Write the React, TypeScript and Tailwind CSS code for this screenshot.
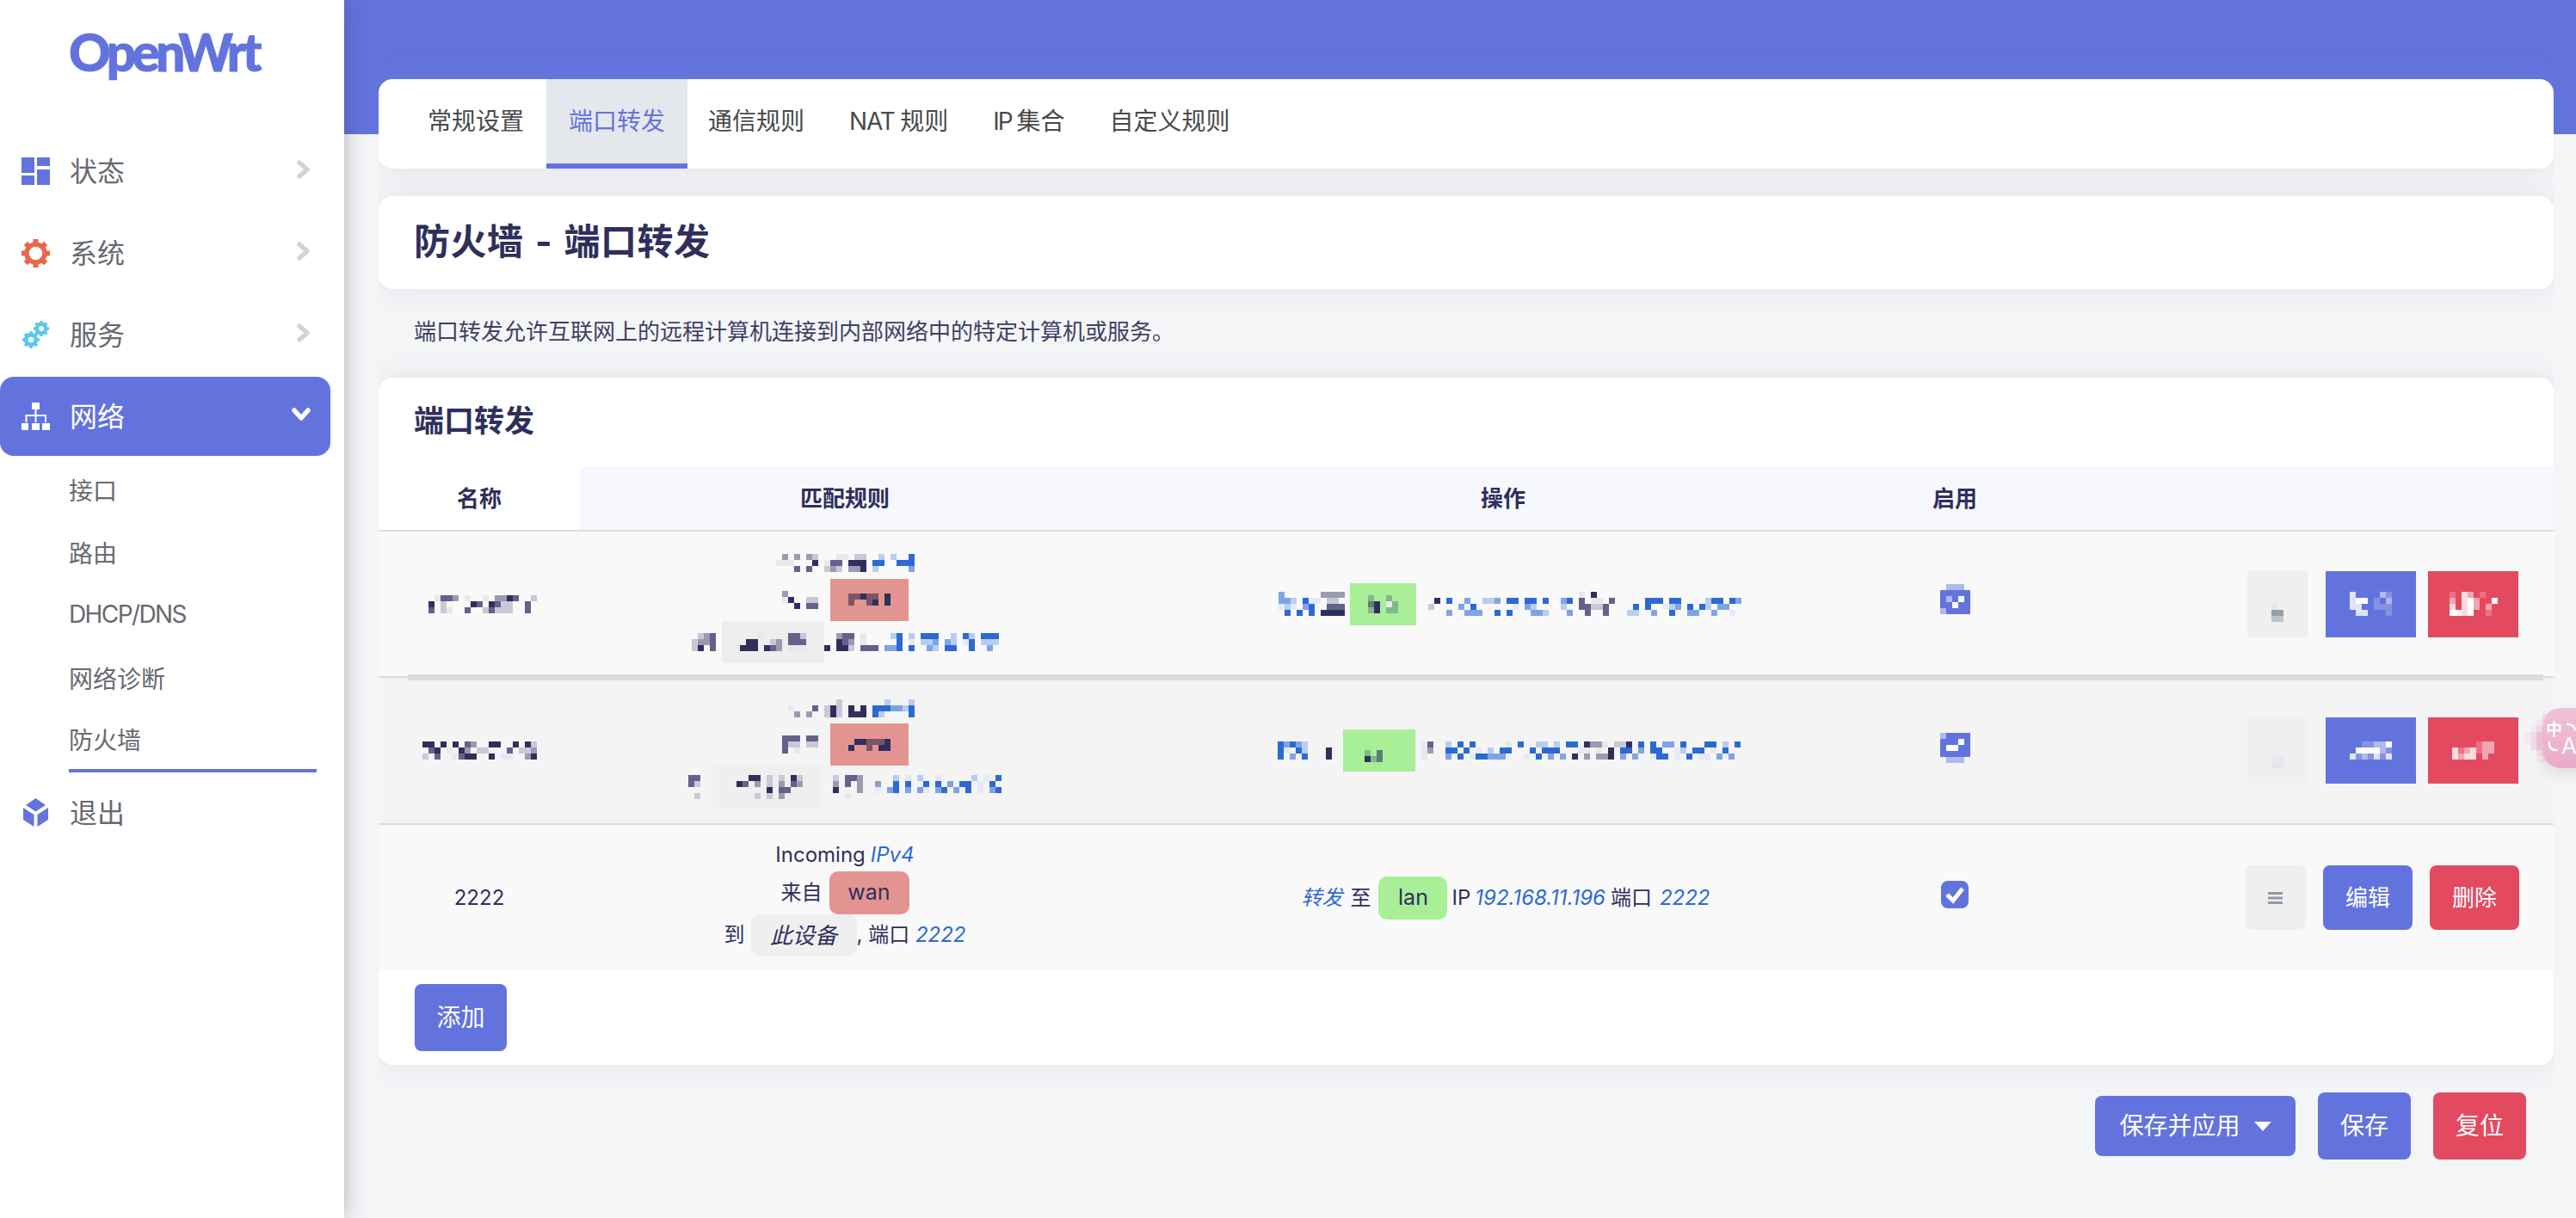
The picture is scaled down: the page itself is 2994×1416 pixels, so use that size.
import React from "react";

const P: Record<string, string> = {
  a: "#e8e8ee", c: "#c8c8d6", e: "#9a9ab2", g: "#62628a", k: "#2f2f5c",
  q: "#e3eaf9", r: "#b8cdf0", s: "#7fa4e6", t: "#2d69d4",
  w: "#ffffff", x: "rgba(255,255,255,.8)", y: "rgba(255,255,255,.5)", z: "rgba(255,255,255,.22)",
  n: "#7fb98a", o: "#5a7f75", h: "#7a5566", b: "#92a0ae", d: "#bcc4ca", f: "#e4e7ea",
  u: "#6373de", v: "#b0b8ee",
  P: "#f0c3d9", Q: "#f5dbe7", R: "#f4eaef",
};

function Mosaic({ rows }: { rows: string[] }) {
  const cols = Math.max(...rows.map((r) => r.length));
  return (
    <svg width={cols * 7} height={rows.length * 7} shapeRendering="crispEdges" className="block shrink-0">
      {rows.map((r, y) =>
        r.split("").map((ch, x) =>
          P[ch] ? <rect key={`${x}-${y}`} x={x * 7} y={y * 7} width={7} height={7} fill={P[ch]} /> : null
        )
      )}
    </svg>
  );
}

function Chevron() {
  return (
    <svg width="18" height="24" viewBox="0 0 18 24" className="mr-[-3px] mb-[4px] ml-auto">
      <polyline points="4,4 13,12 4,20" fill="none" stroke="#cfd4d9" strokeWidth="5.5" strokeLinecap="round" strokeLinejoin="round" />
    </svg>
  );
}

function GearShape({ color, small }: { color: string; small?: boolean }) {
  return (
    <g>
      <circle cx="16.5" cy="16.5" r={small ? 9.5 : 10.5} fill="none" stroke={color} strokeWidth={small ? 8 : 5.5} />
      {[0, 45, 90, 135, 180, 225, 270, 315].map((a) => (
        <rect key={a} x="13.5" y="0" width="6" height="6" fill={color} transform={`rotate(${a} 16.5 16.5)`} />
      ))}
    </g>
  );
}

function IconDash() {
  return (
    <svg width="33" height="33" viewBox="0 0 33 33" fill="#6373de">
      <rect x="0" y="0" width="15" height="18" />
      <rect x="0" y="21" width="15" height="11" />
      <rect x="18" y="0" width="15" height="10" />
      <rect x="18" y="14" width="15" height="18" />
    </svg>
  );
}

function IconGear() {
  return (
    <svg width="33" height="33" viewBox="0 0 33 33">
      <GearShape color="#e9674a" />
    </svg>
  );
}

function IconCogs() {
  return (
    <svg width="33" height="33" viewBox="0 0 33 33">
      <g transform="translate(13.9 -0.1) scale(0.55)">
        <GearShape color="#5bc8ec" small />
      </g>
      <g transform="translate(1.1 12.1) scale(0.6)">
        <GearShape color="#5bc8ec" small />
      </g>
    </svg>
  );
}

function IconSitemap() {
  return (
    <svg width="33" height="33" viewBox="0 0 33 33" fill="#fff">
      <rect x="12" y="0" width="9" height="8" />
      <rect x="0" y="24" width="8" height="8" />
      <rect x="12" y="24" width="9" height="8" />
      <rect x="24" y="24" width="9" height="8" />
      <path d="M15.5 8h2v6h11.5v9h-2v-7h-9.5v7h-2v-7h-9v7h-2v-9h11z" />
    </svg>
  );
}

function IconCube() {
  return (
    <svg width="33" height="33" viewBox="0 0 33 33" fill="#6373de">
      <polygon points="16.5,0 28,8 16.5,15.5 5,8" />
      <polygon points="2,11 14.5,19 14.5,33 2,25" />
      <polygon points="31,11 18.5,19 18.5,33 31,25" />
    </svg>
  );
}

function NavItem({ icon, label, active }: { icon: React.ReactNode; label: string; active?: boolean }) {
  return (
    <div
      className={
        active
          ? "flex h-[92px] w-[384px] items-center rounded-2xl bg-[#6373de] pl-[25px] pr-[25px] text-[32px] text-white"
          : "flex h-[92px] w-[384px] items-center pl-[25px] pr-[25px] text-[32px] text-[#666a70]"
      }
    >
      <span className="flex w-[33px] shrink-0">{icon}</span>
      <span className="ml-[23px] pt-[1px]">{label}</span>
      {active ? (
        <svg width="24" height="18" viewBox="0 0 24 18" className="mr-[-3px] mb-[4px] ml-auto">
          <polyline points="4,4 12,13 20,4" fill="none" stroke="#fff" strokeWidth="5.5" strokeLinecap="round" strokeLinejoin="round" />
        </svg>
      ) : (
        <Chevron />
      )}
    </div>
  );
}

function SubItem({ label, active }: { label: string; active?: boolean }) {
  return (
    <div className="flex h-[73px] items-center text-[28px] text-[#666a70]">
      <span className={active ? "flex h-[73px] w-[288px] items-center border-b-4 border-[#6373de] pt-[3px]" : "flex h-[73px] items-center pt-[2px]"}>
        {label}
      </span>
    </div>
  );
}

function Tab({ label, active }: { label: React.ReactNode; active?: boolean }) {
  return (
    <div
      className={
        active
          ? "flex h-full items-center border-b-[6px] border-[#6373de] bg-[#e4e7ec] px-[26px] text-[#6373de]"
          : "flex h-full items-center border-b-[6px] border-transparent px-[26px] text-[#4a4a4a]"
      }
    >
      {label}
    </div>
  );
}

function Bars() {
  return (
    <svg width="17" height="14" viewBox="0 0 17 14" fill="#8f9aaa">
      <rect x="0" y="0" width="17" height="3" />
      <rect x="0" y="5.5" width="17" height="3" />
      <rect x="0" y="11" width="17" height="3" />
    </svg>
  );
}

const rowCls = "grid grid-cols-[234px_616px_914px_136px_1fr] items-center";

function MosaicButtons({ sort, edit, del }: { sort: string[]; edit: string[]; del: string[] }) {
  return (
    <div className="flex items-center justify-end pr-[41px]">
      <div className="flex h-[77px] w-[70px] items-center justify-center bg-[#efefef] pt-[20px]">
        <Mosaic rows={sort} />
      </div>
      <div className="ml-[21px] flex h-[77px] w-[105px] items-center justify-center bg-[#6373de]">
        <Mosaic rows={edit} />
      </div>
      <div className="ml-[14px] flex h-[77px] w-[105px] items-center justify-center bg-[#e34a60]">
        <Mosaic rows={del} />
      </div>
    </div>
  );
}

export default function App() {
  return (
    <div className="relative flex h-[1416px] w-[2994px] overflow-hidden bg-[#f4f5f7] font-[Inter,'Noto_Sans_CJK_SC',sans-serif] text-[24px] text-[#2f2f5c]">
      <aside className="relative z-10 h-full w-[400px] shrink-0 bg-white shadow-[0_0_22px_rgba(50,60,80,0.38)]">
        <div className="flex h-[153px] justify-center pt-[20px] pr-[20px] font-['Lato',sans-serif] text-[60px] leading-[80px] font-black tracking-[-4.5px] text-[#6373de] [-webkit-text-stroke:1px_#6373de]">
          OpenWrt
        </div>
        <div className="flex flex-col gap-[3px]">
          <NavItem icon={<IconDash />} label="状态" />
          <NavItem icon={<IconGear />} label="系统" />
          <NavItem icon={<IconCogs />} label="服务" />
          <NavItem icon={<IconSitemap />} label="网络" active />
        </div>
        <div className="flex flex-col pl-[80px] pt-[3px]">
          <SubItem label="接口" />
          <SubItem label="路由" />
          <div className="flex h-[73px] items-center pb-[3px] text-[28px] tracking-[-1.6px] text-[#666a70]">DHCP/DNS</div>
          <SubItem label="网络诊断" />
          <SubItem label="防火墙" active />
        </div>
        <div className="flex h-[92px] w-[384px] items-center pl-[25px] pr-[25px] text-[32px] text-[#666a70]">
          <span className="flex w-[33px] shrink-0">
            <IconCube />
          </span>
          <span className="ml-[23px] pt-[4px]">退出</span>
        </div>
      </aside>

      <main className="flex h-full min-w-0 flex-1 flex-col">
        <div className="h-[156px] shrink-0 bg-[#6373de]" />
        <div className="mx-[40px] mr-[26px] -mt-[64px] flex flex-col overflow-x-clip pb-[60px]">
          <div className="flex h-[104px] items-center rounded-2xl bg-white pl-[31px] text-[28px] shadow-[0_0_32px_rgba(136,152,170,0.18)]">
            <Tab label="常规设置" />
            <Tab label="端口转发" active />
            <Tab label={<span className="-ml-[2px]">通信规则</span>} />
            <Tab label={<span><span className="tracking-[-1.2px]">NAT </span>规则</span>} />
            <Tab label={<span><span className="tracking-[-2px]">IP </span>集合</span>} />
            <Tab label="自定义规则" />
          </div>

          <div className="mt-[32px] flex h-[108px] items-center rounded-2xl bg-white px-[41px] pb-[4px] text-[42px] font-bold tracking-[0.5px] [word-spacing:3px] shadow-[0_0_32px_rgba(136,152,170,0.18)]">
            防火墙 - 端口转发
          </div>

          <div className="flex h-[103px] items-center px-[41px] pb-[5px] text-[26px] text-[#3f3f66]">
            端口转发允许互联网上的远程计算机连接到内部网络中的特定计算机或服务。
          </div>

          <div className="flex flex-col rounded-2xl bg-white shadow-[0_0_32px_rgba(136,152,170,0.18)]">
            <div className="flex h-[103px] items-center px-[41px] pb-[2px] text-[35px] font-bold">端口转发</div>

            <div className={`${rowCls} h-[76px] items-stretch border-b-2 border-[#dcdcdc] text-[26px] font-bold`}>
              <div className="flex items-center justify-center bg-white">名称</div>
              <div className="flex items-center justify-center bg-[#f7f8fc]">匹配规则</div>
              <div className="flex items-center justify-center bg-[#f7f8fc]">操作</div>
              <div className="flex items-center justify-center bg-[#f7f8fc]">启用</div>
              <div className="bg-[#f7f8fc]" />
            </div>

            {/* Row 1 (pixelated in the source) */}
            <div className={`${rowCls} h-[168px] bg-[#f9f9f9]`}>
              <div className="flex justify-center">
                <Mosaic rows={["..agge.a..a.eekg..c", ".k.c....kg.kgcc..g.", ".g.ca..g..cgccc..g."]} />
              </div>
              <div className="flex flex-col items-center pt-[3px]">
                <div className="flex h-[36px] items-center">
                  <Mosaic rows={[".e.e.ec...aa.cc..r.r..t", "aaa...k.agg.kkk.tt..ttt", "...g.g..cec.eek.r.....s"]} />
                </div>
                <div className="flex h-[50px] items-center gap-[14px]">
                  <Mosaic rows={["e.....", "ak..cc", "..k.gg"]} />
                  <div className="flex h-[49px] w-[91px] items-center justify-center bg-[#e39491]">
                    <Mosaic rows={["hhkhh.k", "h..hk.k"]} />
                  </div>
                </div>
                <div className="flex h-[49px] items-center">
                  <Mosaic rows={[".ceg", "ceeg", "ck.g"]} />
                  <div className="ml-[7px] flex h-[49px] w-[119px] items-center justify-center bg-[#eeeeee]">
                    <Mosaic rows={["...a....ggc", ".kk..ce.ggg", "kkk.kge.aaa"]} />
                  </div>
                  <Mosaic rows={["..egg.a....rt.r.ttt..r.tr.ttt", "..kge.a.....t.q.rrs.sr.qt.rrr", "k.kkc.ggg.sst.t..sr.tt..t..s."]} />
                </div>
              </div>
              <div className="flex items-center justify-center pl-[16px]">
                <Mosaic rows={["s......eeee", "ssr.tqq.cc.", "qrq.st..ggg", ".t.t.t.kkkk"]} />
                <div className="ml-[6px] flex h-[49px] w-[77px] items-center justify-center bg-[#a8ef98]">
                  <Mosaic rows={["n..n.", "ok.an", "nk.nn"]} />
                </div>
                <div className="ml-[14px]">
                  <Mosaic
                    rows={[
                      ".........................a.k........................",
                      ".k.t..s..rrs.tt.tt.t..st.g.aa.g.....ttt.tt....rtt.ts",
                      "c....s.t......q.sr....r..ggccg....t.t..qrs.t.tr.ss.",
                      "...s..sss..t.t...ssr...s..g..g...rr..s..t..ss..s..q.",
                    ]}
                  />
                </div>
              </div>
              <div className="flex justify-center pb-[12px]">
                <Mosaic rows={[".vvv.", "uuuuu", "uvuwu", "uuwuu", "vuuuu"]} />
              </div>
              <MosaicButtons
                sort={["f.", "bb", "dd"]}
                edit={["x....yz", "xww.z.y", "xx..zzz", ".xx...z"]}
                del={["z.xy.z..", "y.xwy..w", "x.xwy.y.", "wwxw..z."]}
              />
            </div>

            {/* Thick pixelated rule over the thin row border */}
            <div className="relative h-[2px] bg-[#dcdcdc]">
              <div className="absolute -top-[2px] right-[12px] left-[34px] h-[7px] bg-[#dcdcdc]" />
            </div>

            {/* Row 2 (pixelated in the source) */}
            <div className={`${rowCls} h-[169px] bg-[#f4f4f5]`}>
              <div className="flex justify-center">
                <Mosaic rows={["kk.k.k.ge..kk..k.kc", ".gk.a.ke.cc...g.cce", "c.g..agkk..k.aa..ek"]} />
              </div>
              <div className="flex flex-col items-center">
                <div className="flex h-[36px] items-center">
                  <Mosaic rows={["..........c.......r...r", "..a...g.ckc.k.k.tttssrt", "...e.e..ckc.kkk.tr....t"]} />
                </div>
                <div className="flex h-[49px] items-center gap-[14px]">
                  <Mosaic rows={["ggg.gg", "gcc.cc", "g.a..."]} />
                  <div className="flex h-[49px] w-[91px] items-center justify-center bg-[#e39491]">
                    <Mosaic rows={[".kkhhhk", "k..h.kk"]} />
                  </div>
                </div>
                <div className="flex h-[50px] items-center">
                  <Mosaic rows={["gg", "gc", "..", ".c"]} />
                  <div className="ml-[14px] flex h-[50px] w-[126px] items-center justify-center bg-[#efefef]">
                    <Mosaic rows={["...kk.c.c.kc", ".kg.e.c.e.ge", "......k.gg..", "....c.c.e..."]} />
                  </div>
                  <div className="ml-[14px]">
                    <Mosaic rows={["c.gge.....r.a.r..a.....r.q.t", "e.g.e..e..t.t..t.t.s.tt.q.t.", "k...e..q.st.s.sq.st.s.t.q.st", "..a........................."]} />
                  </div>
                </div>
              </div>
              <div className="flex items-center justify-center pl-[14px]">
                <Mosaic rows={["tstsr.....", "tq.tr...k.", "t.s.t...k."]} />
                <div className="ml-[6px] flex h-[49px] w-[84px] items-center justify-center bg-[#a8ef98] pr-[14px] pt-[12px]">
                  <Mosaic rows={["n.o", "kno"]} />
                </div>
                <div className="ml-[7px]">
                  <Mosaic
                    rows={[
                      "ag..r.t.t.....a.t..rr.r.tt.keea.cck.t.t.ss.t...tt.r.t",
                      "ae..tt.t.q.r.tt...t.ttt...aa.a.k.tt.s.tt..ar.tt.a.t..",
                      "a...s.t.qttsss...q.t.s.s.k.e.eek.s.s..qtt.q.t.qq.s.s.",
                    ]}
                  />
                </div>
              </div>
              <div className="flex justify-center pb-[6px]">
                <Mosaic rows={["vuuuu", "uuuwu", "uwwuu", "uuuuu", ".vvv."]} />
              </div>
              <MosaicButtons
                sort={["..", "aa", "ff"]}
                edit={["..zzyyw", ".wwwwyz", "xzyzxzx"]}
                del={["....zyy", "xzyxzyy", "xyxx.y."]}
              />
            </div>

            <div className="h-[2px] bg-[#dcdcdc]" />

            {/* Row 3 */}
            <div className={`${rowCls} h-[169px] bg-[#f9f9fa]`}>
              <div className="text-center">2222</div>
              <div className="flex flex-col items-center pt-[2px]">
                <div className="flex h-[35px] items-center gap-[6px] pb-[3px]">
                  <span>Incoming</span>
                  <i className="text-[#2d69d4]">IPv4</i>
                </div>
                <div className="flex h-[50px] items-center gap-[8px]">
                  <span>来自</span>
                  <span className="flex h-[50px] w-[93px] items-center justify-center rounded-[10px] bg-[#e39491] text-[25px]">wan</span>
                </div>
                <div className="flex h-[49px] items-center">
                  <span>到</span>
                  <i className="ml-[7px] flex h-[49px] w-[123px] items-center justify-center rounded-[10px] bg-[#efefef] text-[26px]">此设备</i>
                  <span>
                    , 端口 <i className="text-[#2d69d4]">2222</i>
                  </span>
                </div>
              </div>
              <div className="flex items-center justify-center pl-[6px]">
                <i className="text-[#2d69d4]">转发</i>
                <span className="ml-[9px]">至</span>
                <span className="ml-[9px] flex h-[50px] w-[80px] items-center justify-center rounded-[10px] bg-[#a8ef98] text-[25px]">lan</span>
                <span className="ml-[5px]">IP</span>
                <i className="ml-[5px] text-[#2d69d4]">192.168.11.196</i>
                <span className="ml-[6px]">端口</span>
                <i className="ml-[9px] text-[#2d69d4]">2222</i>
              </div>
              <div className="flex justify-center pb-[7px]">
                <span className="flex h-[32px] w-[32px] items-center justify-center rounded-[8px] bg-[#6373de]">
                  <svg width="24" height="22" viewBox="0 0 24 22">
                    <polyline points="3,11 10,18 21,4" fill="none" stroke="#fff" strokeWidth="5" />
                  </svg>
                </span>
              </div>
              <div className="flex items-center justify-end gap-[20px] pr-[40px] text-[26px] text-white">
                <span className="flex h-[75px] w-[71px] items-center justify-center rounded-[8px] bg-[#efefef]">
                  <Bars />
                </span>
                <span className="flex h-[75px] w-[104px] items-center justify-center rounded-[8px] bg-[#6373de]">编辑</span>
                <span className="flex h-[75px] w-[104px] items-center justify-center rounded-[8px] bg-[#e34a60]">删除</span>
              </div>
            </div>

            <div className="flex h-[110px] items-center px-[42px] pb-[1px]">
              <span className="flex h-[78px] w-[107px] items-center justify-center rounded-[8px] bg-[#6373de] text-[28px] text-white">添加</span>
            </div>
          </div>

          <div className="mt-[32px] flex items-center justify-end gap-[26px] pr-[32px] text-[28px] text-white">
            <span className="flex h-[70px] w-[233px] items-center justify-center gap-[16px] rounded-[8px] bg-[#6373de]">
              保存并应用
              <svg width="20" height="11" viewBox="0 0 20 11" fill="#fff">
                <polygon points="0,0 20,0 10,11" />
              </svg>
            </span>
            <span className="flex h-[78px] w-[108px] items-center justify-center rounded-[8px] bg-[#6373de]">保存</span>
            <span className="flex h-[78px] w-[108px] items-center justify-center rounded-[8px] bg-[#e34a60]">复位</span>
          </div>
        </div>
      </main>

      {/* Floating translate widget */}
      <div className="absolute top-[830px] left-[2934px] z-20">
        <Mosaic rows={["...QQ", "..RQP", ".RQPP", "RQPPP", "RQPPP", ".QPPP", "..QPP", "..RQ"]} />
      </div>
      <div className="absolute top-[823px] left-[2956px] z-20 h-[70px] w-[60px] rounded-[20px] bg-gradient-to-b from-[#f1c1d9] to-[#e9abc9] shadow-[0_8px_16px_rgba(120,120,130,0.18)]">
        <span className="absolute top-[16px] left-[3px] text-[19px] leading-[20px] font-bold text-white">中</span>
        <span className="absolute top-[34px] left-[21px] text-[26px] leading-[20px] text-white">A</span>
        <svg width="38" height="50" viewBox="0 0 38 50" className="absolute top-[16px] left-[4px]" fill="none" stroke="#fff" strokeWidth="2.5" strokeLinecap="round">
          <path d="M24 3c5 0 8 2 9 6" />
          <path d="M3 24c-1 5 2 9 8 9" />
        </svg>
      </div>
    </div>
  );
}
